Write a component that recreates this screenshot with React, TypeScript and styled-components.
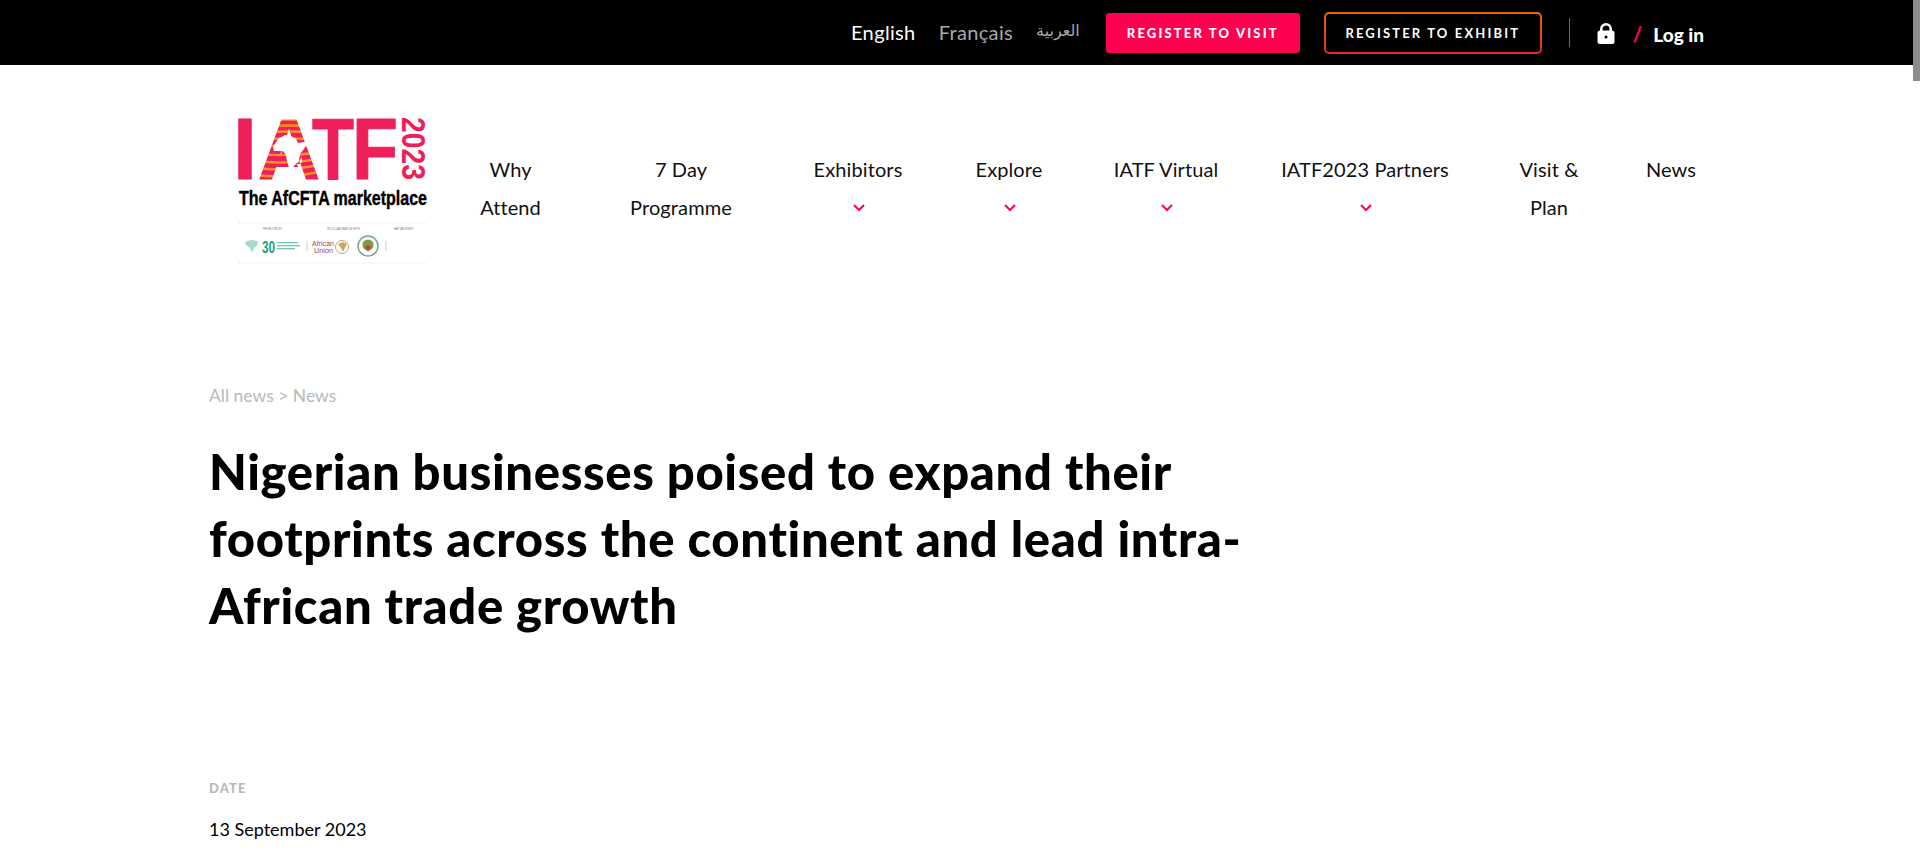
import React from 'react';
import styled, { createGlobalStyle } from 'styled-components';

const Global = createGlobalStyle`
  html, body {
    margin: 0;
    height: 100%;
    overflow: hidden;
    background: #fff;
  }
  body {
    font-family: Lato, "DejaVu Sans", sans-serif;
    color: #000;
  }
`;

const TopBar = styled.div`
  height: 65px;
  background: #000;
  display: flex;
  align-items: center;
  padding-left: 851px;
`;

const Lang = styled.a<{ $active?: boolean }>`
  font-size: 20px;
  letter-spacing: 0.35px;
  color: ${(p) => (p.$active ? '#fff' : '#a8a8a8')};
  margin-right: 23px;
  padding-bottom: 2px;
`;

const ArabicLang = styled(Lang)`
  font-family: "DejaVu Sans", sans-serif;
  font-size: 16px;
  letter-spacing: 0;
  margin-right: 26px;
  padding-bottom: 4px;
`;

const SolidButton = styled.a`
  box-sizing: border-box;
  width: 194px;
  height: 40px;
  background: #ff0050;
  border-radius: 3px;
  color: #fff;
  font-size: 13px;
  font-weight: 900;
  letter-spacing: 2.15px;
  display: flex;
  align-items: center;
  justify-content: center;
  margin-right: 24px;
`;

const OutlineButton = styled.a`
  box-sizing: border-box;
  width: 218px;
  height: 42px;
  border: 2px solid transparent;
  border-radius: 5px;
  background: linear-gradient(#000, #000) padding-box,
    linear-gradient(180deg, #e8650f, #ea2430) border-box;
  color: #fff;
  font-size: 13px;
  font-weight: 700;
  letter-spacing: 2.15px;
  display: flex;
  align-items: center;
  justify-content: center;
`;

const Divider = styled.span`
  width: 1px;
  height: 29px;
  background: #666;
  margin: 0 27px;
`;

const LockIcon = styled.svg`
  width: 18px;
  height: 21px;
  margin-top: 2px;
`;

const Slash = styled.span`
  color: #ff0050;
  font-size: 20px;
  font-weight: 900;
  margin: 3px 11px 0 18px;
`;

const Login = styled.a`
  color: #fff;
  font-size: 19px;
  font-weight: 900;
  margin-top: 3px;
`;

const Scrollbar = styled.div`
  position: fixed;
  top: 0;
  right: 0;
  width: 7px;
  height: 81px;
  background: #8c8c8c;
`;

const Header = styled.header`
  display: flex;
  padding: 50px 0 0 232px;
`;

const LogoBox = styled.svg`
  width: 198px;
  height: 150px;
  margin-right: 6px;
  flex-shrink: 0;
`;

const Nav = styled.nav`
  display: grid;
  grid-template-columns: 149px 192px 162px 140px 174px 224px 144px 100px;
  padding-top: 35px;
`;

const NavItem = styled.a`
  text-align: center;
  font-size: 20px;
  line-height: 38px;
  letter-spacing: 0.1px;
  color: #111;
`;

const Chevron = styled.svg`
  display: block;
  width: 14px;
  height: 9px;
  margin: 15px auto 0;
  transform: translateX(1px);
`;

const Main = styled.main`
  padding: 118px 0 0 209px;
`;

const Crumbs = styled.div`
  font-size: 17.5px;
  line-height: 26px;
  color: #b9b9b9;
`;

const Title = styled.h1`
  margin: 29px 0 0;
  width: 1060px;
  font-size: 49px;
  line-height: 67px;
  font-weight: 900;
  letter-spacing: 0.64px;
`;

const MetaLabel = styled.div`
  margin-top: 140px;
  font-size: 13px;
  line-height: 18px;
  font-weight: 900;
  letter-spacing: 1.1px;
  color: #b9b9b9;
`;

const MetaValue = styled.div`
  margin-top: 19px;
  font-size: 18px;
  line-height: 26px;
`;

const navItems: { lines: string[]; menu?: boolean }[] = [
  { lines: ['Why', 'Attend'] },
  { lines: ['7 Day', 'Programme'] },
  { lines: ['Exhibitors'], menu: true },
  { lines: ['Explore'], menu: true },
  { lines: ['IATF Virtual'], menu: true },
  { lines: ['IATF2023 Partners'], menu: true },
  { lines: ['Visit &', 'Plan'] },
  { lines: ['News'] },
];

const pink = '#ee1f5b';

const Logo = () => (
  <LogoBox viewBox="-6 0 198 150">
    <defs>
      <pattern id="stripes" x="17" y="0" width="68" height="66" patternUnits="userSpaceOnUse">
        <rect width="68" height="66" fill={pink} />
        <g fill="none" stroke="#f7931e" strokeWidth="2.4">
          <path d="M0 6q34 -3 68 0" />
          <path d="M0 12q34 -3 68 0" />
          <path d="M0 18q34 -3 68 0" />
          <path d="M0 25q34 -3 68 0" />
          <path d="M0 32q34 -3 68 0" />
          <path d="M0 39q34 3 68 -2" />
          <path d="M0 46q34 4 68 -3" />
          <path d="M0 53q34 4 68 -4" />
          <path d="M0 60q34 4 68 -4" />
        </g>
      </pattern>
    </defs>
    <g fontFamily="Liberation Sans" fontWeight="700" fontSize="88" fill={pink} stroke={pink} strokeWidth="1">
      <text x="-5" y="64" textLength="24" lengthAdjust="spacingAndGlyphs">I</text>
      <text x="74" y="64" textLength="42" lengthAdjust="spacingAndGlyphs">T</text>
      <text x="114" y="64" textLength="46" lengthAdjust="spacingAndGlyphs">F</text>
    </g>
    <polygon points="49,24 60,52 38,52" fill="url(#stripes)" />
    <text x="19" y="64" fontFamily="Liberation Sans" fontWeight="700" fontSize="88" textLength="64" lengthAdjust="spacingAndGlyphs" fill="url(#stripes)">
      A
    </text>
    <path d="M35 32l5-8 7-4 6 1 5 3 2 4 6-1 4 0-4 7-4 5-1 7-4 4-3 3-3 0-2-7-1-6-3-4-5 0-4 0z" fill="#fff" />
    <path d="M62 45l2-3 0 5-2 2z" fill="#fff" />
    <text transform="translate(164 2) rotate(90)" fontFamily="Liberation Sans" fontWeight="700" fontSize="34" textLength="63" lengthAdjust="spacingAndGlyphs" fill={pink}>
      2023
    </text>
    <text x="1" y="90" fontFamily="Liberation Sans" fontWeight="700" fontSize="20" textLength="188" lengthAdjust="spacingAndGlyphs" fill="#000" stroke="#000" strokeWidth="0.4">
      The AfCFTA marketplace
    </text>
    <line x1="1" y1="108" x2="189" y2="108" stroke="#ddd" strokeDasharray="1 2" />
    <line x1="1" y1="148" x2="189" y2="148" stroke="#ddd" strokeDasharray="1 2" />
    <g fontFamily="Liberation Sans" fontSize="2.6" fill="#777">
      <text x="25" y="115">PROMOTED BY</text>
      <text x="89" y="115">IN COLLABORATION WITH</text>
      <text x="156" y="115">HAITIAN EVENT</text>
    </g>
    <path d="M7 127l6-2 7 1-1 5-3 2-2 5-2-5-4-3z" fill="#a6dcc8" />
    <text x="24" y="138" fontFamily="Liberation Sans" fontWeight="700" fontSize="16" fill="#12a37a" textLength="13" lengthAdjust="spacingAndGlyphs">30</text>
    <g fill="#12a37a" opacity=".6">
      <rect x="39" y="127" width="21" height="1.3" />
      <rect x="39" y="130" width="23" height="1.3" />
      <rect x="39" y="133" width="18" height="1.3" />
    </g>
    <line x1="69" y1="126" x2="69" y2="136" stroke="#ccc" />
    <text x="74" y="131" fontFamily="Liberation Sans" fontSize="8" textLength="22" lengthAdjust="spacingAndGlyphs" fill="#a5475c">African</text>
    <text x="76" y="138" fontFamily="Liberation Sans" fontSize="8" textLength="19" lengthAdjust="spacingAndGlyphs" fill="#a5475c">Union</text>
    <circle cx="104" cy="132" r="6.5" fill="#fff" stroke="#c9a868" strokeWidth="1" />
    <path d="M100 129l5-2 4 2-2 4-2 4-2-4z" fill="#c9a868" />
    <circle cx="130" cy="131" r="10" fill="#fff" stroke="#7da58a" strokeWidth="1.5" />
    <circle cx="130" cy="130" r="5.5" fill="#7a9a3c" />
    <path d="M127 131l6 0-3 6z" fill="#c2403a" />
    <line x1="148" y1="126" x2="148" y2="136" stroke="#ccc" />
  </LogoBox>
);

const App: React.FC = () => (
  <>
    <Global />
    <TopBar>
      <Lang $active>English</Lang>
      <Lang>Français</Lang>
      <ArabicLang>العربية</ArabicLang>
      <SolidButton>REGISTER TO VISIT</SolidButton>
      <OutlineButton>REGISTER TO EXHIBIT</OutlineButton>
      <Divider />
      <LockIcon viewBox="0 0 18 21">
        <path d="M4.3 9V6a4.7 4.7 0 0 1 9.4 0V9" fill="none" stroke="#fff" strokeWidth="2.6" />
        <rect x="0.5" y="7.5" width="17" height="13.5" rx="2.5" fill="#fff" />
        <circle cx="9" cy="14" r="1.5" fill="#000" />
      </LockIcon>
      <Slash>/</Slash>
      <Login>Log in</Login>
    </TopBar>
    <Scrollbar />
    <Header>
      <Logo />
      <Nav>
        {navItems.map((item) => (
          <NavItem key={item.lines[0]}>
            {item.lines.map((line) => (
              <div key={line}>{line}</div>
            ))}
            {item.menu && (
              <Chevron viewBox="0 0 14 9">
                <path d="M2 2l5 5 5-5" fill="none" stroke="#ff0050" strokeWidth="2" />
              </Chevron>
            )}
          </NavItem>
        ))}
      </Nav>
    </Header>
    <Main>
      <Crumbs>All news &gt; News</Crumbs>
      <Title>Nigerian businesses poised to expand their footprints across the continent and lead intra-African trade growth</Title>
      <MetaLabel>DATE</MetaLabel>
      <MetaValue>13 September 2023</MetaValue>
    </Main>
  </>
);

export default App;
